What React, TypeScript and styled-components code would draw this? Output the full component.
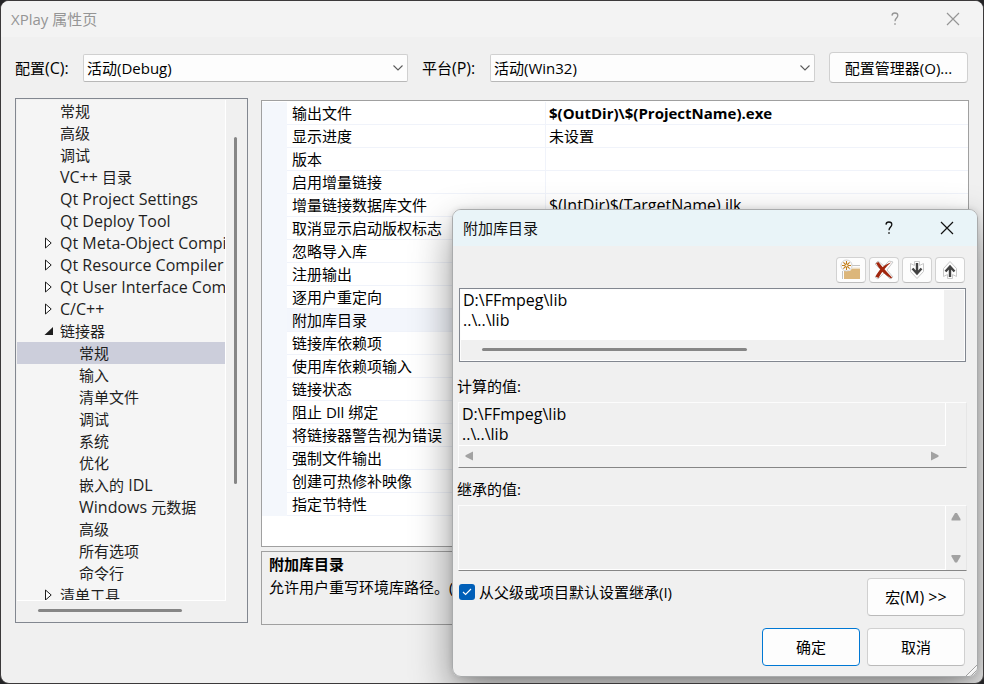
import React from "react";
import styled, { createGlobalStyle } from "styled-components";

const GlobalStyle = createGlobalStyle`
  *, *::before, *::after { box-sizing: border-box; }
  html, body { margin: 0; }
  body {
    background: #242426;
    color: #000;
    font-family: "Open Sans", "Noto Sans CJK SC", sans-serif;
    font-size: 15px;
    line-height: 20px;
  }
  button, select, textarea, input { font: inherit; color: inherit; margin: 0; }
`;

const Window = styled.main`
  position: relative;
  display: flex;
  flex-direction: column;
  height: 100vh;
  overflow: hidden;
  background: #f0f0f0;
  border: 1px solid #3b393a;
  border-radius: 9px;
`;

const Latin = styled.span`
  font-size: 16px;
  line-height: 20px;
  white-space: pre;
`;

const TitleBar = styled.header<{ $active?: boolean }>`
  display: flex;
  flex: none;
  align-items: center;
  height: 36px;
  padding: 0 1px 0 10px;
  background: ${(p) => (p.$active ? "#e9f4f8" : "#f3f3f3")};
  color: ${(p) => (p.$active ? "#111" : "#959595")};
`;

const Title = styled.h1`
  flex: 1;
  margin: 0;
  font-size: 15px;
  font-weight: 400;
`;

const CaptionButton = styled.button`
  display: grid;
  place-items: center;
  width: 58px;
  height: 36px;
  padding: 0;
  border: 0;
  background: transparent;
`;

const ConfigBar = styled.div`
  display: flex;
  flex: none;
  align-items: center;
  gap: 14px;
  padding: 15px 15px 15px 14px;
`;

const Field = styled.div`
  display: flex;
  flex: 1;
  align-items: center;
`;

const FieldLabel = styled.label`
  flex: none;
  width: 68px;
`;

const SelectBox = styled.div`
  display: grid;
  flex: 1;
  align-items: center;

  > * { grid-area: 1 / 1; }
  > svg { justify-self: end; margin-right: 4px; pointer-events: none; }
`;

const Select = styled.select`
  appearance: none;
  width: 100%;
  height: 28px;
  padding: 0 3px;
  border: 1px solid #d0d0d0;
  border-bottom-color: #b8b8b8;
  border-radius: 2px;
  background: #fdfdfd;
`;

const Button = styled.button<{ $primary?: boolean; $compact?: boolean }>`
  flex: none;
  width: ${(p) => (p.$compact ? "139px" : "98px")};
  height: ${(p) => (p.$compact ? "31px" : "38px")};
  padding: 0;
  border: 1px solid ${(p) => (p.$primary ? "#0078d4" : "#d0d0d0")};
  border-bottom-color: ${(p) => (p.$primary ? "#0078d4" : "#bababa")};
  border-radius: 4px;
  background: #fdfdfd;
`;

const Workspace = styled.div`
  display: flex;
  flex: 1;
  gap: 13px;
  min-height: 0;
  padding: 0 14px 58px 14px;
`;

const TreePanel = styled.nav`
  display: grid;
  grid-template: minmax(0, 1fr) 20px / minmax(0, 1fr) 20px;
  flex: none;
  width: 233px;
  margin-bottom: 2px;
  border: 1px solid #828790;
  padding: 1px;
`;

const Tree = styled.ul`
  margin: 0;
  padding: 0;
  overflow: hidden;
  list-style: none;
  background: #f5f5f5;
  border-right: 1px solid #fff;
  border-bottom: 1px solid #fff;
  color: #1e1e1e;
`;

const TreeItem = styled.li<{ $level: number; $selected?: boolean }>`
  display: flex;
  align-items: center;
  height: 22px;
  padding-left: ${(p) => (p.$level === 2 ? "43px" : "24px")};
  white-space: nowrap;
  background: ${(p) => (p.$selected ? "#cccedb" : "transparent")};
`;

const Twisty = styled.span`
  display: grid;
  flex: none;
  place-items: center;
  width: 19px;
  height: 22px;
  padding-right: 5px;
`;

const Track = styled.div<{ $vertical?: boolean }>`
  display: flex;
  flex-direction: ${(p) => (p.$vertical ? "column" : "row")};
  align-items: center;
  padding: ${(p) => (p.$vertical ? "37px 2px 37px 0" : "0 21px 2px")};
`;

const Thumb = styled.div<{ $vertical?: boolean; $length: string }>`
  width: ${(p) => (p.$vertical ? "3px" : p.$length)};
  height: ${(p) => (p.$vertical ? p.$length : "3px")};
  border-radius: 2px;
  background: #868686;
`;

const Details = styled.section`
  display: flex;
  flex: 1;
  flex-direction: column;
  gap: 4px;
  min-width: 0;
  padding-top: 2px;
`;

const GridPanel = styled.div`
  flex: 1;
  min-height: 0;
  padding-top: 1px;
  overflow: hidden;
  background: #fff;
  border: 1px solid #a0a0a0;
`;

const PropertyTable = styled.table`
  width: 100%;
  border-collapse: separate;
  border-spacing: 0;
  table-layout: fixed;
`;

const PropertyRow = styled.tr<{ $selected?: boolean }>`
  background: ${(p) => (p.$selected ? "#f3f6fc" : "#fff")};
`;

const Gutter = styled.td`
  width: 25px;
  padding: 0;
  background: #f4f7fc;
`;

const NameCell = styled.th`
  width: 259px;
  height: 23px;
  padding: 0 5px;
  border-right: 1px solid #f0f3fa;
  border-bottom: 1px solid #f0f3fa;
  font-weight: 400;
  line-height: 22px;
  text-align: left;
  white-space: nowrap;
`;

const ValueCell = styled.td<{ $bold?: boolean }>`
  height: 23px;
  padding: 0 3px;
  border-bottom: 1px solid #f0f3fa;
  font-weight: ${(p) => (p.$bold ? 700 : 400)};
  line-height: 22px;
`;

const Description = styled.div`
  flex: none;
  height: 74px;
  padding: 1px 7px;
  border: 1px solid #a0a0a0;
`;

const DescriptionTitle = styled.h2`
  margin: 0;
  font-size: 15px;
  font-weight: 700;
  line-height: 23px;
`;

const DescriptionText = styled.p`
  margin: 0;
  line-height: 23px;
  white-space: nowrap;
`;

const Dialog = styled.section`
  position: absolute;
  right: 5px;
  bottom: 6px;
  width: 526px;
  overflow: hidden;
  border: 1px solid #a9abac;
  border-radius: 9px;
  background: #f0f0f0;
`;

const DialogShadow = styled.div`
  position: absolute;
  right: 5px;
  bottom: 6px;
  width: 526px;
  height: 468px;
  border-radius: 9px;
  box-shadow: 0 18px 40px rgba(0, 0, 0, 0.42), 0 0 6px rgba(0, 0, 0, 0.12);
`;

const DialogBody = styled.div`
  display: flex;
  flex-direction: column;
  padding: 11px 10px 10px 4px;
`;

const ToolBar = styled.div`
  display: flex;
  justify-content: flex-end;
  gap: 3px;
  margin: 0 2px 5px;
`;

const ToolButton = styled.button`
  display: grid;
  place-items: center;
  width: 30px;
  height: 26px;
  padding: 0;
  border: 1px solid #d2d2d2;
  border-bottom-color: #bdbdbd;
  border-radius: 4px;
  background: #fdfdfd;
`;

const EditBox = styled.div`
  display: grid;
  grid-template: 50px 20px / minmax(0, 1fr) 20px;
  margin: 0 1px 0 2px;
  padding: 1px;
  border: 1px solid #828790;
  outline: 1px solid #fdfdfd;
  outline-offset: -2px;
`;

const ReadBox = styled.div<{ $scroll: "horizontal" | "vertical" }>`
  display: grid;
  grid-template: ${(p) =>
    p.$scroll === "horizontal" ? "43px 21px / minmax(0, 1fr) 20px" : "64px / minmax(0, 1fr) 20px"};
  margin-left: 1px;
  border: 1px solid #fcfcfc;
  border-right-color: #e6e6e6;
  border-bottom-color: #868686;
`;

const PathText = styled.textarea<{ $readOnly?: boolean }>`
  display: block;
  width: 100%;
  height: 100%;
  padding: ${(p) => (p.$readOnly ? "1px 3px" : "0 2px")};
  border: 0;
  overflow: hidden;
  resize: none;
  outline: 0;
  font-size: 16px;
  line-height: 20px;
  background: ${(p) => (p.$readOnly ? "#f0f0f0" : "#fff")};
  border-right: ${(p) => (p.$readOnly ? "1px solid #fff" : "0")};
  border-bottom: ${(p) => (p.$readOnly ? "1px solid #fff" : "0")};
`;

const Arrows = styled.div<{ $vertical?: boolean }>`
  display: flex;
  flex-direction: ${(p) => (p.$vertical ? "column" : "row")};
  align-items: center;
  justify-content: space-between;
  padding: ${(p) => (p.$vertical ? "6px 1px 6px 0" : "0 6px 2px")};
`;

const ValueLabel = styled.label<{ $first?: boolean }>`
  height: ${(p) => (p.$first ? "40px" : "37px")};
  padding-top: ${(p) => (p.$first ? "14px" : "11px")};
`;

const OptionRow = styled.div`
  display: flex;
  align-items: flex-start;
  justify-content: space-between;
  padding: 7px 2px 12px;
`;

const CheckLabel = styled.label`
  display: flex;
  align-items: center;
  gap: 4px;
  padding-top: 4px;
`;

const CheckBox = styled.span`
  display: grid;
  place-items: center;
  > * { grid-area: 1 / 1; }
  > svg { pointer-events: none; }
`;

const CheckInput = styled.input`
  appearance: none;
  width: 16px;
  height: 16px;
  border-radius: 3px;
  background: #005fb8;
`;

const Actions = styled.div`
  display: flex;
  justify-content: flex-end;
  gap: 7px;
  padding-right: 2px;
`;

const Grip = styled.svg`
  position: absolute;
  right: 0;
  bottom: 0;
`;

const QuestionIcon = () => (
  <svg width="10" height="14" viewBox="0 0 10 14" fill="none" stroke="currentColor" strokeWidth="1.3">
    <path d="M2 3.6C2.1 1.9 3.2 1 4.9 1S7.8 2 7.8 3.5C7.8 5.8 5 6.2 5 9.2" />
    <path d="M5 11.2V12.8" strokeWidth="1.5" />
  </svg>
);

const CloseIcon = () => (
  <svg width="14" height="14" viewBox="0 0 14 14" fill="none" stroke="currentColor" strokeWidth="1.2">
    <path d="M1 1L13 13M13 1L1 13" />
  </svg>
);

const ChevronIcon = () => (
  <svg width="12" height="8" viewBox="0 0 12 8" fill="none" stroke="#5c5c5c" strokeWidth="1.1">
    <path d="M1.5 1.5L6 6L10.5 1.5" />
  </svg>
);

const ClosedTwisty = () => (
  <svg width="9" height="12" viewBox="0 0 9 12" fill="#fff" stroke="#1e1e1e">
    <path d="M1.5 1V11L7.2 6Z" />
  </svg>
);

const OpenTwisty = () => (
  <svg width="9" height="9" viewBox="0 0 9 9" fill="#1e1e1e">
    <path d="M9 0V8H0.5Z" />
  </svg>
);

const NewFolderIcon = () => (
  <svg width="22" height="22" viewBox="0 0 22 22" fill="none">
    <path d="M11 6.5H20M2.5 12V20" stroke="#c3c3c3" />
    <path d="M4 20V12H10L12 9.5H20V20Z" fill="#dcb67a" />
    <path d="M11.5 9H20" stroke="#efe3ce" />
    <circle cx="6.5" cy="6.5" r="5.5" fill="#fdfdfd" stroke="#cfcfcf" />
    <path d="M6.5 2V11M2 6.5H11M3.4 3.4L9.6 9.6M9.6 3.4L3.4 9.6" stroke="#c27d1a" strokeWidth="1.1" />
    <circle cx="6.5" cy="6.5" r="1.6" fill="#fff5e2" stroke="#c27d1a" />
  </svg>
);

const DeleteIcon = () => (
  <svg width="22" height="20" viewBox="0 0 22 20" fill="none">
    <path d="M2 4L5 1L11 6L16 1L20 2L14 10L20 17L17 19L11 13L5 19L2 17L8 10Z" stroke="#c9c9c9" />
    <path d="M3 3L5.5 2C9 6.5 13 11 19 17.5L18.2 18.5C12 15 6.5 9.5 3 3Z" fill="#a1260d" />
    <path d="M18 2.5C13.5 6 9 11.5 5.5 18L2.5 16.5C6 10 10.5 5 18 2.5Z" fill="#a1260d" />
  </svg>
);

const MoveIcon = ({ up = false }: { up?: boolean }) => (
  <svg width="16" height="20" viewBox="0 0 16 20" fill="none">
    <g transform={up ? "rotate(180 8 10)" : undefined}>
      <path d="M5.5 1.5H10.5V5.5L14.5 3.5V11.5L8 18.5L1.5 11.5V3.5L5.5 5.5Z" stroke="#c9c9c9" />
      <path d="M8 3V14M3.5 8.5L8 13.5L12.5 8.5" stroke="#424242" strokeWidth="2.4" />
    </g>
  </svg>
);

const CheckIcon = () => (
  <svg width="10" height="8" viewBox="0 0 10 8" fill="none" stroke="#fff" strokeWidth="1.1">
    <path d="M1 4L3.6 6.5L9 1" />
  </svg>
);

const arrowPaths = {
  left: "M8 0.5V9.5L0.5 5.8V4.2Z",
  right: "M1 0.5V9.5L8.5 5.8V4.2Z",
  up: "M0.5 8.5H9.5V7L6 1H4L0.5 7Z",
  down: "M0.5 1H9.5V2.5L6 8.5H4L0.5 2.5Z",
};

const ScrollArrow = ({ direction }: { direction: keyof typeof arrowPaths }) => (
  <svg width="10" height="10" viewBox="0 0 10 10" fill="#a2a2a2">
    <path d={arrowPaths[direction]} />
  </svg>
);

// Sets Latin runs one size larger than the Chinese text around them.
const MixedText = ({ text }: { text: string }) => (
  <span>
    {text
      .split(/([\x20-\x7e]+)/)
      .filter(Boolean)
      .map((run, i) => (/^[\x20-\x7e]/.test(run) ? <Latin key={i}>{run}</Latin> : run))}
  </span>
);

type Node = { text: string; level: 1 | 2; state?: "closed" | "open"; selected?: boolean };

const nodes: Node[] = [
  { text: "常规", level: 1 },
  { text: "高级", level: 1 },
  { text: "调试", level: 1 },
  { text: "VC++ 目录", level: 1 },
  { text: "Qt Project Settings", level: 1 },
  { text: "Qt Deploy Tool", level: 1 },
  { text: "Qt Meta-Object Compiler", level: 1, state: "closed" },
  { text: "Qt Resource Compiler", level: 1, state: "closed" },
  { text: "Qt User Interface Compiler", level: 1, state: "closed" },
  { text: "C/C++", level: 1, state: "closed" },
  { text: "链接器", level: 1, state: "open" },
  { text: "常规", level: 2, selected: true },
  { text: "输入", level: 2 },
  { text: "清单文件", level: 2 },
  { text: "调试", level: 2 },
  { text: "系统", level: 2 },
  { text: "优化", level: 2 },
  { text: "嵌入的 IDL", level: 2 },
  { text: "Windows 元数据", level: 2 },
  { text: "高级", level: 2 },
  { text: "所有选项", level: 2 },
  { text: "命令行", level: 2 },
  { text: "清单工具", level: 1, state: "closed" },
];

type Property = { name: string; value?: string; bold?: boolean; selected?: boolean };

const properties: Property[] = [
  { name: "输出文件", value: "$(OutDir)\\$(ProjectName).exe", bold: true },
  { name: "显示进度", value: "未设置" },
  { name: "版本" },
  { name: "启用增量链接" },
  { name: "增量链接数据库文件", value: "$(IntDir)$(TargetName).ilk" },
  { name: "取消显示启动版权标志" },
  { name: "忽略导入库" },
  { name: "注册输出" },
  { name: "逐用户重定向" },
  { name: "附加库目录", selected: true },
  { name: "链接库依赖项" },
  { name: "使用库依赖项输入" },
  { name: "链接状态" },
  { name: "阻止 Dll 绑定" },
  { name: "将链接器警告视为错误" },
  { name: "强制文件输出" },
  { name: "创建可热修补映像" },
  { name: "指定节特性" },
];

const paths = "D:\\FFmpeg\\lib\n..\\..\\lib";

const Caption = ({ title, active }: { title: string; active?: boolean }) => (
  <TitleBar $active={active}>
    <Title>{title}</Title>
    <CaptionButton aria-label="帮助"><QuestionIcon /></CaptionButton>
    <CaptionButton aria-label="关闭"><CloseIcon /></CaptionButton>
  </TitleBar>
);

const Combo = ({ id, label, value }: { id: string; label: string; value: string }) => (
  <Field>
    <FieldLabel htmlFor={id}><MixedText text={label} /></FieldLabel>
    <SelectBox>
      <Select id={id} defaultValue={value}>
        <option value={value}>{value}</option>
      </Select>
      <ChevronIcon />
    </SelectBox>
  </Field>
);

const DirectoryDialog = () => (
  <Dialog role="dialog" aria-label="附加库目录">
    <Caption title="附加库目录" active />
    <DialogBody>
      <ToolBar>
        <ToolButton aria-label="新行"><NewFolderIcon /></ToolButton>
        <ToolButton aria-label="删除"><DeleteIcon /></ToolButton>
        <ToolButton aria-label="下移"><MoveIcon /></ToolButton>
        <ToolButton aria-label="上移"><MoveIcon up /></ToolButton>
      </ToolBar>
      <EditBox>
        <PathText aria-label="附加库目录" spellCheck={false} defaultValue={paths} />
        <div />
        <Track><Thumb $length="265px" /></Track>
      </EditBox>
      <ValueLabel htmlFor="evaluated" $first>计算的值:</ValueLabel>
      <ReadBox $scroll="horizontal">
        <PathText id="evaluated" readOnly $readOnly spellCheck={false} value={paths} />
        <div />
        <Arrows><ScrollArrow direction="left" /><ScrollArrow direction="right" /></Arrows>
      </ReadBox>
      <ValueLabel htmlFor="inherited">继承的值:</ValueLabel>
      <ReadBox $scroll="vertical">
        <PathText id="inherited" readOnly $readOnly value="" />
        <Arrows $vertical><ScrollArrow direction="up" /><ScrollArrow direction="down" /></Arrows>
      </ReadBox>
      <OptionRow>
        <CheckLabel>
          <CheckBox><CheckInput type="checkbox" defaultChecked /><CheckIcon /></CheckBox>
          从父级或项目默认设置继承(I)
        </CheckLabel>
        <Button><MixedText text="宏(M) >>" /></Button>
      </OptionRow>
      <Actions>
        <Button $primary>确定</Button>
        <Button>取消</Button>
      </Actions>
    </DialogBody>
    <Grip width="12" height="12" viewBox="0 0 12 12" fill="none">
      <path d="M1 12L12 1M6 12L12 6" stroke="#a0a0a0" />
      <path d="M2.5 12L12 2.5M7.5 12L12 7.5" stroke="#fff" />
    </Grip>
  </Dialog>
);

export default function App() {
  return (
    <>
      <GlobalStyle />
      <Window>
        <Caption title="XPlay 属性页" />
        <ConfigBar>
          <Combo id="configuration" label="配置(C):" value="活动(Debug)" />
          <Combo id="platform" label="平台(P):" value="活动(Win32)" />
          <Button $compact>配置管理器(O)...</Button>
        </ConfigBar>
        <Workspace>
          <TreePanel>
            <Tree role="tree">
              {nodes.map((node, i) => (
                <TreeItem
                  key={i}
                  role="treeitem"
                  aria-selected={!!node.selected}
                  $level={node.level}
                  $selected={node.selected}
                >
                  <Twisty>
                    {node.state === "closed" && <ClosedTwisty />}
                    {node.state === "open" && <OpenTwisty />}
                  </Twisty>
                  <MixedText text={node.text} />
                </TreeItem>
              ))}
            </Tree>
            <Track $vertical><Thumb $vertical $length="347px" /></Track>
            <Track><Thumb $length="144px" /></Track>
          </TreePanel>
          <Details>
            <GridPanel>
              <PropertyTable>
                <tbody>
                  {properties.map((p) => (
                    <PropertyRow key={p.name} $selected={p.selected}>
                      <Gutter />
                      <NameCell scope="row">{p.name}</NameCell>
                      <ValueCell $bold={p.bold}>
                        {p.value && (p.bold ? p.value : <MixedText text={p.value} />)}
                      </ValueCell>
                    </PropertyRow>
                  ))}
                </tbody>
              </PropertyTable>
            </GridPanel>
            <Description>
              <DescriptionTitle>附加库目录</DescriptionTitle>
              <DescriptionText>允许用户重写环境库路径。(</DescriptionText>
            </Description>
          </Details>
        </Workspace>
        <DialogShadow />
        <DirectoryDialog />
      </Window>
    </>
  );
}
